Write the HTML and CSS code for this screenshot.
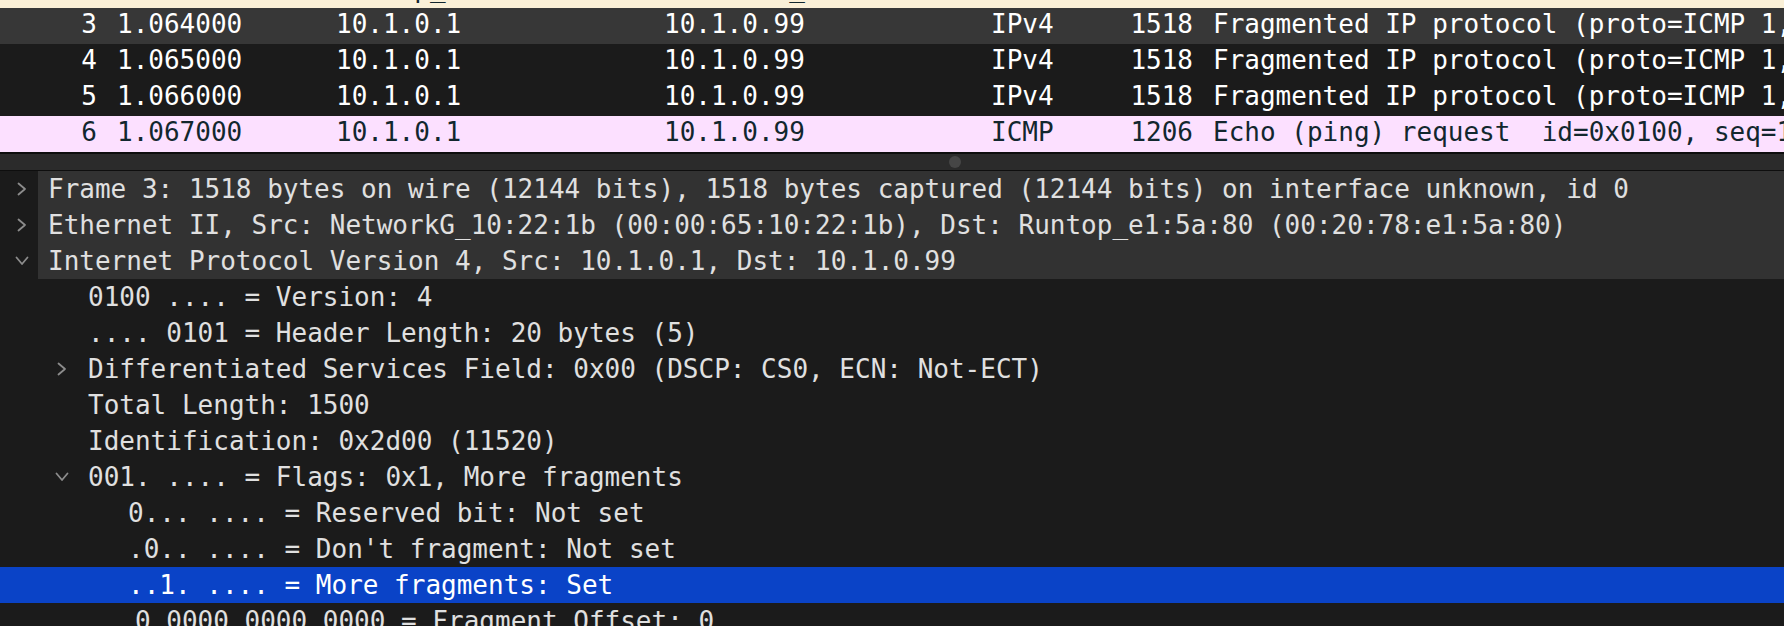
FILE: index.html
```
<!DOCTYPE html>
<html>
<head>
<meta charset="utf-8">
<link rel="stylesheet" href="styles.css">
</head>
<body>
<div class="app">
  <div class="plist">
    <div class="prow arp prev"><span class="no">2</span><span class="time">1.063000</span><span class="src">Runtop_e1:5a:80</span><span class="dst">NetworkG_10:22:1b</span><span class="proto">ARP</span><span class="len">60</span><span class="info">10.1.0.99 is at 00:20:78:e1:5a:80</span></div>
    <div class="prow sel"><span class="no">3</span><span class="time">1.064000</span><span class="src">10.1.0.1</span><span class="dst">10.1.0.99</span><span class="proto">IPv4</span><span class="len">1518</span><span class="info">Fragmented IP protocol (proto=ICMP 1, off=0, ID=2d00) [Reassembled in #6]</span></div>
    <div class="prow"><span class="no">4</span><span class="time">1.065000</span><span class="src">10.1.0.1</span><span class="dst">10.1.0.99</span><span class="proto">IPv4</span><span class="len">1518</span><span class="info">Fragmented IP protocol (proto=ICMP 1, off=1480, ID=2d00) [Reassembled in #6]</span></div>
    <div class="prow"><span class="no">5</span><span class="time">1.066000</span><span class="src">10.1.0.1</span><span class="dst">10.1.0.99</span><span class="proto">IPv4</span><span class="len">1518</span><span class="info">Fragmented IP protocol (proto=ICMP 1, off=2960, ID=2d00) [Reassembled in #6]</span></div>
    <div class="prow icmp"><span class="no">6</span><span class="time">1.067000</span><span class="src">10.1.0.1</span><span class="dst">10.1.0.99</span><span class="proto">ICMP</span><span class="len">1206</span><span class="info">Echo (ping) request  id=0x0100, seq=1/256, ttl=255 (no response found!)</span></div>
  </div>
  <div class="splitter"><span class="handle"></span></div>
  <div class="tree">
    <div class="trow top l0"><span class="tw"><svg class="cr" width="10" height="14" viewBox="0 0 10 14"><polyline points="1.5,1.5 8,7 1.5,12.5"/></svg></span><span class="txt">Frame 3: 1518 bytes on wire (12144 bits), 1518 bytes captured (12144 bits) on interface unknown, id 0</span></div>
    <div class="trow top l0"><span class="tw"><svg class="cr" width="10" height="14" viewBox="0 0 10 14"><polyline points="1.5,1.5 8,7 1.5,12.5"/></svg></span><span class="txt">Ethernet II, Src: NetworkG_10:22:1b (00:00:65:10:22:1b), Dst: Runtop_e1:5a:80 (00:20:78:e1:5a:80)</span></div>
    <div class="trow top l0"><span class="tw"><svg class="cd" width="14" height="10" viewBox="0 0 14 10"><polyline points="1.5,1.5 7,8 12.5,1.5"/></svg></span><span class="txt">Internet Protocol Version 4, Src: 10.1.0.1, Dst: 10.1.0.99</span></div>
    <div class="trow l1"><span class="tw"></span><span class="txt">0100 .... = Version: 4</span></div>
    <div class="trow l1"><span class="tw"></span><span class="txt">.... 0101 = Header Length: 20 bytes (5)</span></div>
    <div class="trow l1"><span class="tw"><svg class="cr" width="10" height="14" viewBox="0 0 10 14"><polyline points="1.5,1.5 8,7 1.5,12.5"/></svg></span><span class="txt">Differentiated Services Field: 0x00 (DSCP: CS0, ECN: Not-ECT)</span></div>
    <div class="trow l1"><span class="tw"></span><span class="txt">Total Length: 1500</span></div>
    <div class="trow l1"><span class="tw"></span><span class="txt">Identification: 0x2d00 (11520)</span></div>
    <div class="trow l1"><span class="tw"><svg class="cd" width="14" height="10" viewBox="0 0 14 10"><polyline points="1.5,1.5 7,8 12.5,1.5"/></svg></span><span class="txt">001. .... = Flags: 0x1, More fragments</span></div>
    <div class="trow l2"><span class="tw"></span><span class="txt">0... .... = Reserved bit: Not set</span></div>
    <div class="trow l2"><span class="tw"></span><span class="txt">.0.. .... = Don't fragment: Not set</span></div>
    <div class="trow l2 hl"><span class="tw"></span><span class="txt">..1. .... = More fragments: Set</span></div>
    <div class="trow l1"><span class="tw"></span><span class="txt">...0 0000 0000 0000 = Fragment Offset: 0</span></div>
  </div>
</div>
</body>
</html>
```

FILE: styles.css
```
html, body {
  margin: 0;
  padding: 0;
  background: #1b1b1b;
  overflow: hidden;
}
.app {
  width: 1784px;
  height: 626px;
  overflow: hidden;
  font-family: "DejaVu Sans Mono", "Liberation Mono", monospace;
  font-size: 26px;
  display: flex;
  flex-direction: column;
}
.plist {
  display: flex;
  flex-direction: column;
  overflow: hidden;
  flex: none;
}
.prow {
  display: flex;
  height: 36px;
  box-sizing: border-box;
  padding-bottom: 4px;
  line-height: 32px;
  white-space: pre;
  background: #1b1b1b;
  color: #ffffff;
  flex: none;
}
.prow.prev {
  margin-top: -28px;
}
.prow.arp {
  background: #faf0d7;
  color: #12272e;
}
.prow.sel {
  background: #373737;
}
.prow.icmp {
  background: #fce0ff;
  color: #12272e;
}
.prow span { flex: none; overflow: hidden; }
.no { width: 97px; margin-right: 3px; text-align: right; }
.time { margin-left: 17px; width: 219px; }
.src { width: 328px; }
.dst { width: 327px; }
.proto { width: 106px; }
.len { width: 96px; margin-right: 4px; text-align: right; }
.prow .info { margin-left: 16px; flex: 1; }

.splitter {
  flex: none;
  height: 16px;
  border-top: 2px solid #0e0e0e;
  border-bottom: 1px solid #0e0e0e;
  background: #2b2b2b;
  display: flex;
  align-items: center;
  padding-left: 949px;
}
.handle {
  width: 12px;
  height: 12px;
  border-radius: 50%;
  background: #464646;
}
.tree {
  flex: 1;
  background: #1b1b1b;
  color: #e0e0e0;
  overflow: hidden;
}
.trow {
  display: flex;
  height: 36px;
  line-height: 36px;
  white-space: pre;
}
.trow.l1 { padding-left: 40px; }
.trow.l2 { padding-left: 80px; }
.tw {
  width: 38px;
  flex: none;
  display: flex;
  align-items: center;
}
.txt {
  flex: 1;
  padding-left: 10px;
  overflow: hidden;
}
.trow.top .txt { background: #323232; }
.trow.hl { background: #0a43c7; color: #ffffff; }
.cr { margin-left: 17px; }
.cd { margin-left: 15px; }
svg polyline {
  fill: none;
  stroke: #8c8c8c;
  stroke-width: 1.8;
  stroke-linecap: round;
  stroke-linejoin: round;
}
```
